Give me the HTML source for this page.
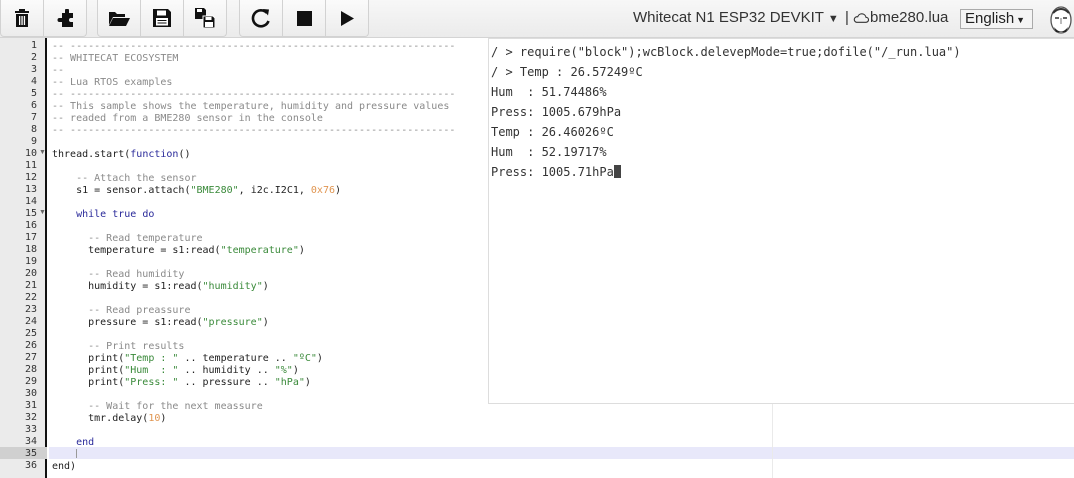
<!DOCTYPE html>
<html><head><meta charset="utf-8"><style>
*{margin:0;padding:0;box-sizing:border-box}
body{width:1074px;height:478px;overflow:hidden;background:#fff;font-family:"Liberation Sans",sans-serif;position:relative}
#bar{position:absolute;left:0;top:0;width:1074px;height:38px;background:linear-gradient(#f7f7f7,#ebebeb);border-bottom:1px solid #d4d4d4}
.grp{position:absolute;top:0;height:37px;display:flex}
.btn{width:44px;height:37px;border:1px solid #d2d2d2;border-top:none;background:linear-gradient(#fbfbfb,#ececec);display:flex;align-items:center;justify-content:center;margin-right:-1px}
.btn:first-child{border-radius:0 0 0 4px}.btn:last-child{border-radius:0 0 4px 0}
#right{position:absolute;top:9px;left:633px;font-size:15px;color:#333;white-space:nowrap}
#sel{position:absolute;left:960px;top:9px;width:73px;height:20px;border:1px solid #aaa;background:#f4f4f4;font-size:15px;padding-left:4px;line-height:18px;color:#222}
#gut{position:absolute;left:0;top:38px;width:47px;height:440px;background:#ebebeb;border-right:2px solid #111}
.ln{position:absolute;left:0;width:37px;text-align:right;font:10px/12px "DejaVu Sans Mono",monospace;color:#333}
#code{position:absolute;left:52px;top:41px;font:10px/12px "DejaVu Sans Mono",monospace;color:#222;white-space:pre}
.c{color:#8a8a8a}.s{color:#3a8a3a}.k{color:#2a2a9a}.n{color:#e09550}
#act{position:absolute;left:49px;top:447px;width:1025px;height:12px;background:#e8e8fa}
#actg{position:absolute;left:0;top:447px;width:47px;height:12px;background:#d0d0d0}
#margin{position:absolute;left:772px;top:38px;width:1px;height:440px;background:#eaeaea}
#con{position:absolute;left:488px;top:38px;width:590px;height:366px;background:#fff;border:1px solid #ddd;font:12px/20px "DejaVu Sans Mono",monospace;color:#333;padding:3px 0 0 2px;white-space:pre}
</style></head><body>
<div id="bar">
 <div class="grp" style="left:0"><div class="btn"><svg width="16" height="18" viewBox="0 0 16 18"><rect x="1" y="2" width="14" height="2" fill="#111"/><rect x="5" y="0" width="6" height="3" fill="#111"/><rect x="2" y="5" width="12" height="13" fill="#111"/><rect x="5" y="7" width="1.3" height="9" fill="#fff"/><rect x="7.4" y="7" width="1.3" height="9" fill="#fff"/><rect x="9.8" y="7" width="1.3" height="9" fill="#fff"/></svg></div><div class="btn"><svg width="20" height="18" viewBox="0 0 20 18"><path d="M7 4h3V1.5a2 2 0 0 1 4 0V4h4v5h-2a2 2 0 0 0 0 4h2v5H7v-5H4.5a2 2 0 0 1 0-4H7z" fill="#111"/></svg></div></div>
 <div class="grp" style="left:97px"><div class="btn"><svg width="22" height="16" viewBox="0 0 22 16"><path d="M1 2h6l2 2h8v3H5L1 15z" fill="#111"/><path d="M5 8h17l-4 8H1z" fill="#111"/></svg></div><div class="btn"><svg width="18" height="18" viewBox="0 0 18 18"><path d="M0 0h15l3 3v15H0z" fill="#111"/><rect x="4" y="1.5" width="9" height="5" fill="#fff"/><rect x="3" y="9" width="12" height="7.5" fill="#fff"/><rect x="4.5" y="11" width="9" height="1" fill="#111"/><rect x="4.5" y="13.5" width="9" height="1" fill="#111"/></svg></div><div class="btn"><svg width="20" height="20" viewBox="0 0 20 20"><path d="M0 0h9l2 2v9H0z" fill="#111"/><rect x="2" y="1" width="5" height="3" fill="#fff"/><path d="M8 8h10l2 2v10H8z" fill="#111" stroke="#fff" stroke-width="1"/><rect x="10.5" y="9" width="6" height="3" fill="#fff"/><rect x="10" y="14" width="8" height="5" fill="#fff"/></svg></div></div>
 <div class="grp" style="left:239px"><div class="btn"><svg width="20" height="20" viewBox="0 0 20 20"><path d="M16 5A8 8 0 1 0 17.5 13" fill="none" stroke="#111" stroke-width="2.6"/><path d="M12 1l6 0.5-1 6z" fill="#111"/></svg></div><div class="btn"><div style="width:15px;height:15px;background:#111"></div></div><div class="btn"><svg width="14" height="15" viewBox="0 0 14 15"><path d="M1 0l13 7.5L1 15z" fill="#111"/></svg></div></div>
 <div id="right">Whitecat N1 ESP32 DEVKIT <span style="font-size:11px">▼</span><span style="position:absolute;left:212px">|</span><svg style="position:absolute;left:220px;top:3px" width="16" height="11" viewBox="0 0 16 11"><path d="M3.5 10.3h9.5a2.5 2.5 0 0 0 0-5 4.3 4.3 0 0 0-8.3-.5 2.8 2.8 0 0 0-1.2 5.5z" fill="none" stroke="#333" stroke-width="1.1"/></svg><span style="position:absolute;left:237px">bme280.lua</span></div>
 <div id="sel">English <span style="font-size:9px;position:absolute;right:7px;top:1px">▼</span></div>
 <svg style="position:absolute;left:1048px;top:5px" width="26" height="30" viewBox="0 0 26 30"><ellipse cx="13" cy="15" rx="10" ry="13" fill="#fff" stroke="#555" stroke-width="1.3"/><path d="M5 8q8-8 16 0" fill="none" stroke="#333" stroke-width="2"/><path d="M7 13h4M15 13h4" stroke="#333" stroke-width="1.4"/><path d="M13 13v6" stroke="#777"/><path d="M6 22q7 9 14 0l-2 5h-10z" fill="#222"/></svg>
</div>
<div id="gut"></div>
<div id="actg"></div>
<div id="act"></div>
<div id="margin"></div>
<div style="position:absolute;left:76px;top:449px;width:1px;height:9px;background:#999"></div>
<div id="code"><span class="c">-- ----------------------------------------------------------------
-- WHITECAT ECOSYSTEM
--
-- Lua RTOS examples
-- ----------------------------------------------------------------
-- This sample shows the temperature, humidity and pressure values
-- readed from a BME280 sensor in the console
-- ----------------------------------------------------------------</span>

thread.start(<span class="k">function</span>()

    <span class="c">-- Attach the sensor</span>
    s1 = sensor.attach(<span class="s">"BME280"</span>, i2c.I2C1, <span class="n">0x76</span>)

    <span class="k">while true do</span>

      <span class="c">-- Read temperature</span>
      temperature = s1:read(<span class="s">"temperature"</span>)

      <span class="c">-- Read humidity</span>
      humidity = s1:read(<span class="s">"humidity"</span>)

      <span class="c">-- Read preassure</span>
      pressure = s1:read(<span class="s">"pressure"</span>)

      <span class="c">-- Print results</span>
      print(<span class="s">"Temp : "</span> .. temperature .. <span class="s">"ºC"</span>)
      print(<span class="s">"Hum  : "</span> .. humidity .. <span class="s">"%"</span>)
      print(<span class="s">"Press: "</span> .. pressure .. <span class="s">"hPa"</span>)

      <span class="c">-- Wait for the next meassure</span>
      tmr.delay(<span class="n">10</span>)

    <span class="k">end</span>

end)</div>
<div class="ln" style="top:40px">1<br>2<br>3<br>4<br>5<br>6<br>7<br>8<br>9<br>10<br>11<br>12<br>13<br>14<br>15<br>16<br>17<br>18<br>19<br>20<br>21<br>22<br>23<br>24<br>25<br>26<br>27<br>28<br>29<br>30<br>31<br>32<br>33<br>34<br>35<br>36</div>
<div style="position:absolute;left:39px;top:149px;font-size:7px;color:#666">▼</div>
<div style="position:absolute;left:39px;top:209px;font-size:7px;color:#666">▼</div>
<div id="con">/ &gt; require("block");wcBlock.delevepMode=true;dofile("/_run.lua")
/ &gt; Temp : 26.57249ºC
Hum  : 51.74486%
Press: 1005.679hPa
Temp : 26.46026ºC
Hum  : 52.19717%
Press: 1005.71hPa<span style="display:inline-block;width:7px;height:13px;background:#444;vertical-align:-2px"></span></div>
</body></html>
